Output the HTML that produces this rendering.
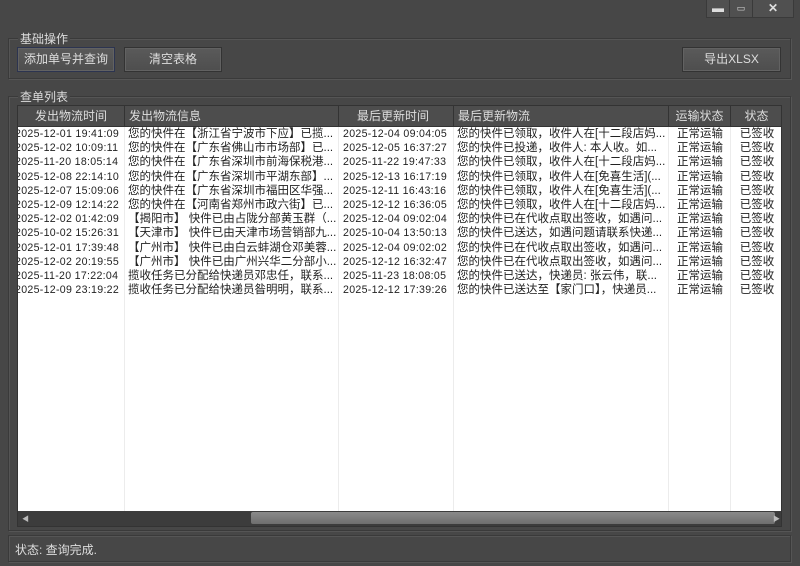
<!DOCTYPE html>
<html><head><meta charset="utf-8"><style>
*{margin:0;padding:0;box-sizing:border-box}
body{width:800px;height:566px;background:#474747;font-family:"Liberation Sans","Noto Sans CJK SC",sans-serif;font-size:12px;color:#ddd;position:relative;overflow:hidden}
.abs{position:absolute}
.tb{top:0;height:18px;border:1px solid #3a3a3a;border-top:none;background:#505050;color:#ddd;text-align:center;font-size:12px;line-height:16px}
.grp{border:1px solid #3a3a3a;box-shadow:inset 1px 1px 0 #555,1px 1px 0 #555}
.lbl{background:#474747;padding:0 2px;font-size:12px;color:#ddd}
.btn{height:25px;background:linear-gradient(#5a5a5a,#4e4e4e);border:1px solid #333;box-shadow:inset 0 0 0 1px #626262;text-align:center;line-height:23px;color:#ddd}
.tbl{left:17px;top:105px;width:765px;height:422px;background:#fff;overflow:hidden;border:1px solid #333}
.hd{position:absolute;top:0;height:21px;background:#4d4d4d;border-right:1px solid #333;border-bottom:1px solid #333;color:#ddd;line-height:20px;font-size:12px}
.vl{position:absolute;top:21px;bottom:15px;width:1px;background:#ececec}
.row{position:absolute;left:0;height:14.2px;width:765px;line-height:14px;color:#222;font-size:11.5px;white-space:nowrap}
.row span{position:absolute;overflow:hidden}
.m{font-family:"Liberation Sans",sans-serif;font-size:10.6px;letter-spacing:0.3px}
</style></head><body>
<div class="abs tb" style="left:706px;width:24px">▬</div>
<div class="abs tb" style="left:729px;width:24px;font-size:9px">▭</div>
<div class="abs tb" style="left:752px;width:42px;font-weight:bold">✕</div>

<div class="abs grp" style="left:8px;top:38px;width:783px;height:41px"></div>
<div class="abs lbl" style="left:18px;top:30px">基础操作</div>
<div class="abs btn" style="left:17px;top:47px;width:98px;border-color:#2c3450">添加单号并查询</div>
<div class="abs btn" style="left:124px;top:47px;width:98px">清空表格</div>
<div class="abs btn" style="left:682px;top:47px;width:99px">导出XLSX</div>

<div class="abs grp" style="left:8px;top:96px;width:783px;height:435px"></div>
<div class="abs lbl" style="left:18px;top:88px">查单列表</div>

<div class="abs tbl">
<div class="hd" style="left:0;width:107px;text-align:center">发出物流时间</div>
<div class="hd" style="left:107px;width:214px;padding-left:4px">发出物流信息</div>
<div class="hd" style="left:321px;width:115px;text-align:right;padding-right:24px">最后更新时间</div>
<div class="hd" style="left:436px;width:215px;padding-left:4px">最后更新物流</div>
<div class="hd" style="left:651px;width:62px;text-align:center">运输状态</div>
<div class="hd" style="left:713px;width:52px;text-align:center">状态</div>
<div class="vl" style="left:106px"></div><div class="vl" style="left:320px"></div><div class="vl" style="left:435px"></div><div class="vl" style="left:650px"></div><div class="vl" style="left:712px"></div>
<div id="rows"></div>
<div style="position:absolute;left:0;bottom:0;width:765px;height:15px;background:#3c3c3c">
<div style="position:absolute;left:233px;top:1px;width:524px;height:12px;background:linear-gradient(#8a8a8a,#6e6e6e);border-radius:2px"></div>
<div style="position:absolute;left:4px;top:3px;color:#bbb;font-size:7px">◀</div>
<div style="position:absolute;right:3px;top:3px;color:#bbb;font-size:7px">▶</div>
</div>
</div>

<div class="abs grp" style="left:8px;top:535px;width:783px;height:27px"></div>
<div class="abs" style="left:15px;top:541px;color:#ddd">状态: 查询完成.</div>

<script>
var d=[
["2025-12-01 19:41:09","您的快件在【浙江省宁波市下应】已揽...","2025-12-04 09:04:05","您的快件已领取，收件人在[十二段店妈..."],
["2025-12-02 10:09:11","您的快件在【广东省佛山市市场部】已...","2025-12-05 16:37:27","您的快件已投递，收件人: 本人收。如..."],
["2025-11-20 18:05:14","您的快件在【广东省深圳市前海保税港...","2025-11-22 19:47:33","您的快件已领取，收件人在[十二段店妈..."],
["2025-12-08 22:14:10","您的快件在【广东省深圳市平湖东部】...","2025-12-13 16:17:19","您的快件已领取，收件人在[免喜生活](..."],
["2025-12-07 15:09:06","您的快件在【广东省深圳市福田区华强...","2025-12-11 16:43:16","您的快件已领取，收件人在[免喜生活](..."],
["2025-12-09 12:14:22","您的快件在【河南省郑州市政六街】已...","2025-12-12 16:36:05","您的快件已领取，收件人在[十二段店妈..."],
["2025-12-02 01:42:09","【揭阳市】 快件已由占陇分部黄玉群（...","2025-12-04 09:02:04","您的快件已在代收点取出签收，如遇问..."],
["2025-10-02 15:26:31","【天津市】 快件已由天津市场营销部九...","2025-10-04 13:50:13","您的快件已送达，如遇问题请联系快递..."],
["2025-12-01 17:39:48","【广州市】 快件已由白云蚌湖仓邓美蓉...","2025-12-04 09:02:02","您的快件已在代收点取出签收，如遇问..."],
["2025-12-02 20:19:55","【广州市】 快件已由广州兴华二分部小...","2025-12-12 16:32:47","您的快件已在代收点取出签收，如遇问..."],
["2025-11-20 17:22:04","揽收任务已分配给快递员邓忠任，联系...","2025-11-23 18:08:05","您的快件已送达，快递员: 张云伟，联..."],
["2025-12-09 23:19:22","揽收任务已分配给快递员昝明明，联系...","2025-12-12 17:39:26","您的快件已送达至【家门口】，快递员..."]];
var h="";
d.forEach(function(r,i){h+='<div class="row" style="top:'+(21+i*14.2)+'px"><span class="m" style="left:-3px;width:110px">'+r[0]+'</span><span style="left:110px;width:210px">'+r[1]+'</span><span class="m" style="left:325px;width:110px">'+r[2]+'</span><span style="left:439px;width:210px">'+r[3]+'</span><span style="left:651px;width:62px;text-align:center">正常运输</span><span style="left:713px;width:52px;text-align:center">已签收</span></div>';});
document.getElementById("rows").innerHTML=h;
</script>
</body></html>
